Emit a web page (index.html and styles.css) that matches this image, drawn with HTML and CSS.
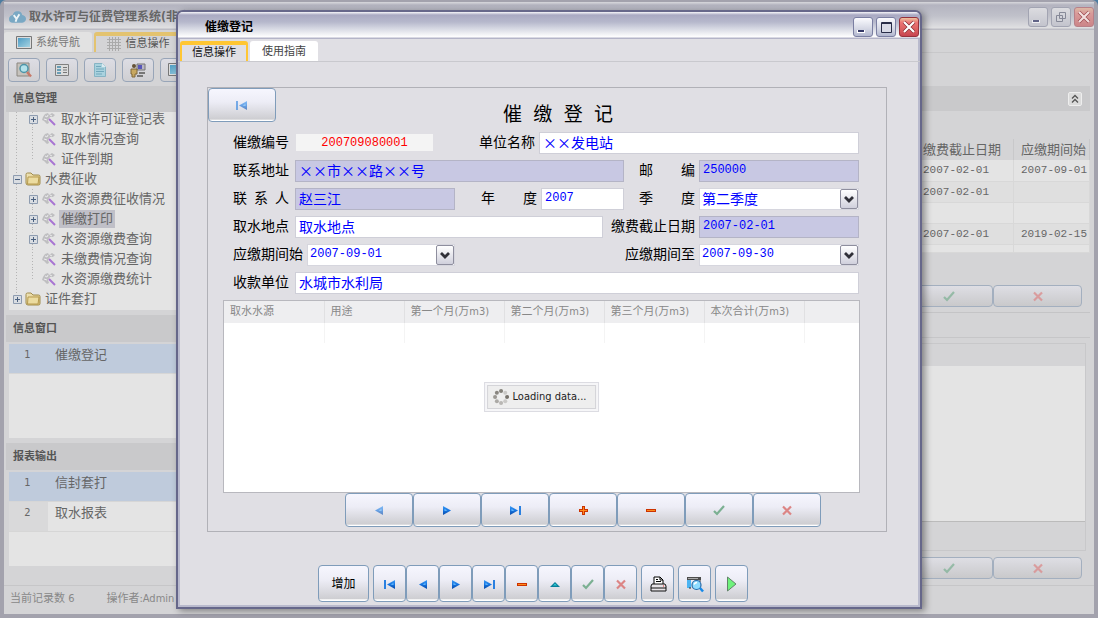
FILE: index.html
```html
<!DOCTYPE html>
<html lang="zh-CN">
<head>
<meta charset="utf-8">
<title>取水许可与征费管理系统</title>
<link rel="stylesheet" href="styles.css">
</head>
<body>
<svg class="defs" aria-hidden="true">
  <defs>
    <linearGradient id="blue" x1="0" y1="0" x2="0" y2="1"><stop offset="0" stop-color="#3f9cf5"/><stop offset=".5" stop-color="#1473e0"/><stop offset="1" stop-color="#0a4aa6"/></linearGradient>
    <linearGradient id="folder" x1="0" y1="0" x2="1" y2="1"><stop offset="0" stop-color="#f0e6bd"/><stop offset="1" stop-color="#d9bd6c"/></linearGradient>
    <linearGradient id="screen" x1="0" y1="0" x2="1" y2="1"><stop offset="0" stop-color="#4d9cc4"/><stop offset="1" stop-color="#a6d3e2"/></linearGradient>
  </defs>
  <symbol id="i-prev" viewBox="0 0 16 16"><path d="M12 4v9L4 8.500z" fill="url(#blue)"/><path d="M10.500 7v2L7.500 8.500z" fill="#6bc0ff"/></symbol>
  <symbol id="i-next" viewBox="0 0 16 16"><path d="M4 4v9l8-4.500z" fill="url(#blue)"/><path d="M5.500 7v2l3-.5z" fill="#6bc0ff"/></symbol>
  <symbol id="i-first" viewBox="0 0 16 16"><path d="M2 4h2v9H2z" fill="#2a80e0"/><path d="M13 4v9L5 8.500z" fill="url(#blue)"/><path d="M11.500 7v2L8.500 8.500z" fill="#6bc0ff"/></symbol>
  <symbol id="i-last" viewBox="0 0 16 16"><path d="M12 4h2v9h-2z" fill="#2a80e0"/><path d="M3 4v9l8-4.500z" fill="url(#blue)"/><path d="M4.500 7v2l3-.5z" fill="#6bc0ff"/></symbol>
  <symbol id="i-plus" viewBox="0 0 16 16"><path d="M7 4h3v3h3v3h-3v3H7v-3H4V7h3z" fill="#cc3300"/><path d="M8 5h1v3h3v1H9v3H8V9H5V8h3z" fill="#ff8a1c"/></symbol>
  <symbol id="i-minus" viewBox="0 0 16 16"><path d="M3 7h10v3H3z" fill="#cc3300"/><path d="M4 8h8v1H4z" fill="#ff8a1c"/></symbol>
  <symbol id="i-up" viewBox="0 0 16 16"><path d="M3 11l5-5 5 5z" fill="#087f9a"/><path d="M6 9.500l2-2 2 2z" fill="#35d0d8"/></symbol>
  <symbol id="i-check" viewBox="0 0 16 16"><path d="M3 9l3 3 7-8" fill="none" stroke="#7bb092" stroke-width="2.200"/></symbol>
  <symbol id="i-cross" viewBox="0 0 16 16"><path d="M4 4.500l8 8m0-8l-8 8" fill="none" stroke="#dc8585" stroke-width="2.200"/></symbol>
  <symbol id="i-print" viewBox="0 0 18 18"><path d="M5 9V2h6l3 3v4" fill="#fff" stroke="#000"/><path d="M11 2v3h3M7 4.500h2M7 6.500h5" fill="none" stroke="#000"/><path d="M3 9h13l1 2v5H2v-5z" fill="#e6e2e6" stroke="#111"/><path d="M2 13h15" stroke="#111"/><path d="M14 11h1" stroke="#e22"/></symbol>
  <symbol id="i-preview" viewBox="0 0 18 18"><path d="M1 2h14v3H1z" fill="#4c4c4c"/><path d="M2 3h10v1H2z" fill="#aaa"/><path d="M1 5h4v8H1z" fill="#4cb4f2"/><path d="M5 13H3M14 5v2" stroke="#333"/><circle cx="10.500" cy="10" r="4.500" fill="#8fdcff" stroke="#2468a8" stroke-width="1.200"/><path d="M8 9.500q1-2 3-2" stroke="#fff" stroke-width="1.500" fill="none"/><path d="M14 13l3 3.500" stroke="#1689e8" stroke-width="2.500"/></symbol>
  <symbol id="i-run" viewBox="0 0 18 18"><path d="M4.500 2v14L13 9z" fill="#6ff27c" stroke="#63836a"/></symbol>
  <symbol id="i-leaf" viewBox="0 0 16 16"><path d="M2 6l2-3 3-1 1 2 3-2 3 2-2 2-3 0-2 3 1 3-2 1-3-3-2-1z" fill="#bfbfc1"/><path d="M4 5l2 1 1-2M3 8l3 1M9 4l2 1" stroke="#ececec" fill="none"/><path d="M8 8l6 6" stroke="#a874d2" stroke-width="2"/></symbol>
  <symbol id="i-folder" viewBox="0 0 16 16"><path d="M1 3.500q0-1.500 1.500-1.500H6l2 2h5.500q1.500 0 1.500 1.500v7q0 1.500-1.500 1.500H3q-2 0-2-2z" fill="url(#folder)" stroke="#a08c4c"/><path d="M3 6h11l-1 7H2.500z" fill="#ecdca0" stroke="#b79b50"/></symbol>
  <symbol id="i-exp" viewBox="0 0 9 9"><path d="M.5.5h8v8h-8z" fill="#d9dde2" stroke="#8e9cb0"/><path d="M2 4.500h5M4.500 2v5" stroke="#4b6180"/></symbol>
  <symbol id="i-col" viewBox="0 0 9 9"><path d="M.5.5h8v8h-8z" fill="#d9dde2" stroke="#8e9cb0"/><path d="M2 4.500h5" stroke="#4b6180"/></symbol>
  <symbol id="i-screen" viewBox="0 0 16 14"><path d="M.5.500h15v12H.5z" fill="#ddd" stroke="#777"/><path d="M2 2h12v9H2z" fill="url(#screen)"/></symbol>
  <symbol id="i-search" viewBox="0 0 16 16"><path d="M1 1h12v13H1z" fill="#c7c3bd" stroke="#8b8780"/><circle cx="8" cy="6.500" r="4" fill="#b4e2ea" stroke="#4d95a8" stroke-width="1.500"/><path d="M11 10l4 4.500" stroke="#c77a6a" stroke-width="2.500"/></symbol>
  <symbol id="i-list" viewBox="0 0 16 16"><path d="M1.500 2.500h13v11h-13z" fill="#dcdcdc" stroke="#808080"/><path d="M3 4h4v8H3z" fill="#6a9db4"/><path d="M3 6.500h4M3 9.500h4" stroke="#ddd"/><path d="M9 5.500h4M9 8h4M9 10.500h4" stroke="#777"/></symbol>
  <symbol id="i-doc" viewBox="0 0 16 16"><path d="M2.500 1.500h8l3 3v10h-11z" fill="#a9d2de" stroke="#86b4c4"/><path d="M4 4.500h5M4 7h8M4 9.500h8M4 12h6" stroke="#72a8bc"/><path d="M10 1v4h4" fill="#dbeaf0"/></symbol>
  <symbol id="i-user" viewBox="0 0 16 16"><path d="M7 2h8v6H7z" fill="#b9b6c4" stroke="#777"/><path d="M8 3h4v4H8z" fill="#5756b8"/><circle cx="4" cy="4" r="2" fill="#645236"/><path d="M1 7h6v5H5v3H2v-3H1z" fill="#c8a860" stroke="#80683a"/><path d="M9 11h6M7 14h6" stroke="#777" stroke-width="2"/></symbol>
  <symbol id="i-grid" viewBox="0 0 14 14"><path d="M2.500 0v14M5.500 0v14M8.500 0v14M11.500 0v14M0 2.500h14M0 5.500h14M0 8.500h14M0 11.500h14" stroke="#aaa"/></symbol>
  <symbol id="i-min" viewBox="0 0 20 20"><path d="M4 13h8v3H4z" fill="#fff"/><path d="M5 13h6v2H5z" fill="#343866"/></symbol>
  <symbol id="i-max" viewBox="0 0 20 20"><path d="M5.500 5.500h10v10h-10zM5 6.500h11" fill="#d9dbe7" stroke="#292d48"/></symbol>
  <symbol id="i-restore" viewBox="0 0 20 20"><path d="M8.500 5.500h6v6h-6zM5.500 8.500h6v6h-6z" fill="#d5d6dc" stroke="#676b7d"/></symbol>
  <symbol id="i-close" viewBox="0 0 20 20"><path d="M5 5l10 10M15 5L5 15" stroke="#842c32" stroke-width="3.500"/><path d="M5 5l10 10M15 5L5 15" stroke="#fff" stroke-width="2.200"/></symbol>
  <symbol id="i-arrow" viewBox="0 0 16 16"><path d="M4 6l4 4 4-4" fill="none" stroke="#303038" stroke-width="2.800"/></symbol>
</svg>

<div class="app">
  <header class="titlebar">
    <svg class="logo" viewBox="0 0 18 14"><path d="M4 13q-4 0-4-4 0-3 4-4 1-5 6-4 3 0 4 4 4 1 4 4t-4 4z" fill="#79a8c4"/><path d="M5 5l3 4 3-5M8 9l-1 3" stroke="#eef4f7" stroke-width="2" fill="none"/></svg>
    <h1>取水许可与征费管理系统(非商用)</h1>
    <div class="win-buttons muted">
      <button aria-label="最小化"><svg><use href="#i-min"/></svg></button>
      <button aria-label="还原"><svg><use href="#i-restore"/></svg></button>
      <button class="close" aria-label="关闭"><svg><use href="#i-close"/></svg></button>
    </div>
  </header>
  <nav class="tabs">
    <button class="tab"><svg class="ic16"><use href="#i-screen"/></svg>系统导航</button>
    <button class="tab active"><svg class="ic14"><use href="#i-grid"/></svg>信息操作</button>
  </nav>
  <div class="workspace">
    <aside class="sidebar">
      <div class="tools">
        <button aria-label="查询"><svg class="ic16"><use href="#i-search"/></svg></button>
        <button aria-label="列表"><svg class="ic16"><use href="#i-list"/></svg></button>
        <button aria-label="文档"><svg class="ic16"><use href="#i-doc"/></svg></button>
        <button aria-label="用户"><svg class="ic16"><use href="#i-user"/></svg></button>
        <button aria-label="屏幕"><svg class="ic16"><use href="#i-screen"/></svg></button>
      </div>
      <h2 class="first">信息管理</h2>
      <div class="tree-box">
        <ul class="tree">
          <li><i class="line"></i><i class="line mid"><svg><use href="#i-exp"/></svg></i><svg class="ic16"><use href="#i-leaf"/></svg><span>取水许可证登记表</span></li>
          <li><i class="line"></i><i class="line mid"></i><svg class="ic16"><use href="#i-leaf"/></svg><span>取水情况查询</span></li>
          <li><i class="line"></i><i class="line mid last"></i><svg class="ic16"><use href="#i-leaf"/></svg><span>证件到期</span></li>
          <li><i class="line"><svg><use href="#i-col"/></svg></i><svg class="ic16"><use href="#i-folder"/></svg><span>水费征收</span></li>
          <li><i class="line"></i><i class="line mid"><svg><use href="#i-exp"/></svg></i><svg class="ic16"><use href="#i-leaf"/></svg><span>水资源费征收情况</span></li>
          <li><i class="line"></i><i class="line mid"><svg><use href="#i-exp"/></svg></i><svg class="ic16"><use href="#i-leaf"/></svg><span class="selected">催缴打印</span></li>
          <li><i class="line"></i><i class="line mid"><svg><use href="#i-exp"/></svg></i><svg class="ic16"><use href="#i-leaf"/></svg><span>水资源缴费查询</span></li>
          <li><i class="line"></i><i class="line mid"></i><svg class="ic16"><use href="#i-leaf"/></svg><span>未缴费情况查询</span></li>
          <li><i class="line"></i><i class="line mid last"></i><svg class="ic16"><use href="#i-leaf"/></svg><span>水资源缴费统计</span></li>
          <li><i class="line last"><svg><use href="#i-exp"/></svg></i><svg class="ic16"><use href="#i-folder"/></svg><span>证件套打</span></li>
        </ul>
      </div>
      <h2>信息窗口</h2>
      <ol class="list">
        <li class="current"><b>1</b><span>催缴登记</span></li>
      </ol>
      <h2>报表输出</h2>
      <ol class="list">
        <li class="current"><b>1</b><span>信封套打</span></li>
        <li><b>2</b><span>取水报表</span></li>
      </ol>
    </aside>
    <main class="records">
      <div class="band"><button aria-label="收起"><svg viewBox="0 0 14 14"><path d="M4 6.500l3-3 3 3M4 10.500l3-3 3 3" fill="none" stroke="#555" stroke-width="1.300"/></svg></button></div>
      <div class="upper">
        <table class="data">
          <colgroup><col><col class="c-due"><col class="c-start"></colgroup>
          <thead><tr><th></th><th>缴费截止日期</th><th>应缴期间始</th></tr></thead>
          <tbody>
            <tr><td></td><td>2007-02-01</td><td>2007-09-01</td></tr>
            <tr><td></td><td>2007-02-01</td><td></td></tr>
            <tr><td></td><td></td><td></td></tr>
            <tr><td></td><td>2007-02-01</td><td>2019-02-15</td></tr>
            <tr class="short"><td></td><td></td><td></td></tr>
          </tbody>
        </table>
        <div class="pair-buttons">
          <button aria-label="确定"><svg class="ic16"><use href="#i-check"/></svg></button>
          <button aria-label="取消"><svg class="ic16"><use href="#i-cross"/></svg></button>
        </div>
      </div>
      <div class="lower">
        <div class="blank-grid"><div class="blank-body"></div></div>
        <div class="pair-buttons">
          <button aria-label="确定"><svg class="ic16"><use href="#i-check"/></svg></button>
          <button aria-label="取消"><svg class="ic16"><use href="#i-cross"/></svg></button>
        </div>
      </div>
    </main>
  </div>
  <footer class="status"><span>当前记录数 6</span><span>操作者:Admin</span></footer>
</div>

<section class="dialog" role="dialog" aria-labelledby="dlg-title">
  <header class="titlebar">
    <h1 id="dlg-title">催缴登记</h1>
    <div class="win-buttons">
      <button aria-label="最小化"><svg><use href="#i-min"/></svg></button>
      <button aria-label="最大化"><svg><use href="#i-max"/></svg></button>
      <button class="close" aria-label="关闭"><svg><use href="#i-close"/></svg></button>
    </div>
  </header>
  <nav class="tabs">
    <button class="tab active">信息操作</button>
    <button class="tab">使用指南</button>
  </nav>
  <div class="page">
    <form class="panel">
      <div class="panel-head">
        <button type="button" class="glass wide faded" aria-label="首条"><svg class="ic16"><use href="#i-first"/></svg></button>
        <h2>催 缴 登 记</h2>
      </div>
      <div class="fields">
        <div class="row">
          <div class="pair"><label for="f-no">催缴编号</label><input id="f-no" class="num code" value="200709080001" readonly></div>
          <div class="pair end tight"><label for="f-name">单位名称</label><input id="f-name" class="w-name" value="××发电站"></div>
        </div>
        <div class="row">
          <div class="pair grow"><label for="f-addr">联系地址</label><input id="f-addr" class="locked" value="××市××路××号" readonly></div>
          <div class="pair end tight"><label for="f-zip">邮 编</label><input id="f-zip" class="num locked" value="250000" readonly></div>
        </div>
        <div class="row">
          <div class="pair"><label for="f-man">联 系 人</label><input id="f-man" class="locked" value="赵三江" readonly></div>
          <div class="pair end tight"><label for="f-year">年 度</label><input id="f-year" class="num w-year" value="2007"></div>
          <div class="pair tight"><label for="f-q">季 度</label><div class="combo"><select id="f-q"><option>第二季度</option></select><i><svg class="ic16"><use href="#i-arrow"/></svg></i></div></div>
        </div>
        <div class="row narrow">
          <div class="pair grow"><label for="f-place">取水地点</label><input id="f-place" value="取水地点"></div>
          <div class="pair end tight"><label class="w-6" for="f-due">缴费截止日期</label><input id="f-due" class="num locked" value="2007-02-01" readonly></div>
        </div>
        <div class="row">
          <div class="pair tight"><label class="w-5" for="f-from">应缴期间始</label><div class="combo small"><select id="f-from" class="num"><option>2007-09-01</option></select><i><svg class="ic16"><use href="#i-arrow"/></svg></i></div></div>
          <div class="pair end tight"><label class="w-5" for="f-to">应缴期间至</label><div class="combo"><select id="f-to" class="num"><option>2007-09-30</option></select><i><svg class="ic16"><use href="#i-arrow"/></svg></i></div></div>
        </div>
        <div class="row">
          <div class="pair grow"><label for="f-payee">收款单位</label><input id="f-payee" value="水城市水利局"></div>
        </div>
      </div>
      <div class="grid-box">
        <table class="months">
          <colgroup><col class="c100"><col class="c80"><col class="c100"><col class="c100"><col class="c100"><col class="c100"><col></colgroup>
          <thead><tr><th>取水水源</th><th>用途</th><th>第一个月(万m3)</th><th>第二个月(万m3)</th><th>第三个月(万m3)</th><th>本次合计(万m3)</th><th></th></tr></thead>
          <tbody><tr><td></td><td></td><td></td><td></td><td></td><td></td><td></td></tr></tbody>
        </table>
        <div class="loading"><div>
          <svg class="ic16" viewBox="0 0 16 16"><g fill="#77736c"><circle cx="8" cy="2" r="2" opacity=".9"/><circle cx="12.200" cy="3.800" r="2" opacity=".3"/><circle cx="14" cy="8" r="2"/><circle cx="12.200" cy="12.200" r="2" opacity=".3"/><circle cx="8" cy="14" r="2" opacity=".45"/><circle cx="3.800" cy="12.200" r="2" opacity=".55"/><circle cx="2" cy="8" r="2" opacity=".7"/><circle cx="3.800" cy="3.800" r="2" opacity=".85"/></g></svg>
          <span>Loading data...</span></div>
        </div>
      </div>
      <div class="navigator">
        <button type="button" class="glass wide faded" aria-label="上一条"><svg class="ic16"><use href="#i-prev"/></svg></button>
        <button type="button" class="glass wide" aria-label="下一条"><svg class="ic16"><use href="#i-next"/></svg></button>
        <button type="button" class="glass wide" aria-label="末条"><svg class="ic16"><use href="#i-last"/></svg></button>
        <button type="button" class="glass wide" aria-label="新增"><svg class="ic16"><use href="#i-plus"/></svg></button>
        <button type="button" class="glass wide" aria-label="删除"><svg class="ic16"><use href="#i-minus"/></svg></button>
        <button type="button" class="glass wide" aria-label="保存"><svg class="ic16"><use href="#i-check"/></svg></button>
        <button type="button" class="glass wide" aria-label="取消"><svg class="ic16"><use href="#i-cross"/></svg></button>
      </div>
    </form>
    <div class="actions">
      <button class="glass add">增加</button>
      <div class="group">
        <button class="glass" aria-label="首条"><svg class="ic16"><use href="#i-first"/></svg></button>
        <button class="glass" aria-label="上一条"><svg class="ic16"><use href="#i-prev"/></svg></button>
        <button class="glass" aria-label="下一条"><svg class="ic16"><use href="#i-next"/></svg></button>
        <button class="glass" aria-label="末条"><svg class="ic16"><use href="#i-last"/></svg></button>
        <button class="glass" aria-label="删除"><svg class="ic16"><use href="#i-minus"/></svg></button>
        <button class="glass" aria-label="编辑"><svg class="ic16"><use href="#i-up"/></svg></button>
        <button class="glass" aria-label="保存"><svg class="ic16"><use href="#i-check"/></svg></button>
        <button class="glass" aria-label="取消"><svg class="ic16"><use href="#i-cross"/></svg></button>
      </div>
      <button class="glass" aria-label="打印"><svg class="ic18"><use href="#i-print"/></svg></button>
      <button class="glass" aria-label="预览"><svg class="ic18"><use href="#i-preview"/></svg></button>
      <button class="glass" aria-label="执行"><svg class="ic18"><use href="#i-run"/></svg></button>
    </div>
  </div>
</section>
</body>
</html>
```

FILE: styles.css
```css
* { box-sizing: border-box; }

body {
  margin: 0;
  height: 100vh;
  position: relative;
  overflow: hidden;
  background: #4d7ca0;
  font: 11px/16px "DejaVu Sans Condensed", "Noto Sans CJK SC", sans-serif;
  color: #666;
}

h1, h2, ul, ol { margin: 0; padding: 0; list-style: none; }
button, input, select { font: inherit; color: inherit; margin: 0; padding: 0; }
button { display: flex; align-items: center; justify-content: center; }
svg { display: block; flex: none; }
.defs { position: absolute; width: 0; height: 0; }
.ic14 { width: 14px; height: 14px; }
.ic16 { width: 16px; height: 16px; }
.ic18 { width: 18px; height: 18px; }

/* main window */
.app {
  height: 100%;
  display: flex;
  flex-direction: column;
  border: 4px solid #a3a2ad;
  border-top-width: 2px;
  border-radius: 6px 6px 0 0;
  background: #d4d4d6;
}

.titlebar { display: flex; align-items: center; flex: none; }
.titlebar h1 { flex: 1; font-size: 12px; font-weight: 700; white-space: nowrap; }

.app > .titlebar {
  height: 28px;
  padding: 2px 0 0 5px;
  gap: 3px;
  background: linear-gradient(#d8d8dc 0, #b4b4c0 3px, #c0c1ca 14px, #e0e0e2 26px, #bcbcc4 27px);
}
.logo { width: 17px; height: 14px; }

.win-buttons { display: flex; gap: 3px; }
.win-buttons button {
  width: 20px;
  height: 20px;
  border: 1px solid #7b7fa2;
  border-radius: 3px;
  background: linear-gradient(#fbfbfe, #d4d7e4 60%, #b2b7cf);
}
.win-buttons svg { width: 20px; height: 20px; }
.win-buttons .close { border-color: #96323c; background: linear-gradient(#ecc4a0, #ec7474 25%, #dd6262 60%, #c74450); }
.muted button { border-color: #a2a4b2; background: linear-gradient(#dcdce0, #c3c4cd); }
.muted .close { border-color: #b88088; background: linear-gradient(#dcb8a4, #d99a9a 30%, #cc8588); }
.muted svg { opacity: .7; }

.tabs { display: flex; gap: 2px; flex: none; }
.tab { border: 0; width: 68px; height: 20px; padding-top: 2px; border-radius: 3px 3px 0 0; background: #fff; color: #444; }
.tab.active { background: #e0dfe4; color: #111; border: solid #ffc633; border-width: 4px 2px 0; padding: 0; }

.app .tabs { padding: 2px 0 0; border-bottom: 1px solid #c8c8ca; }
.app .tab { width: 88px; gap: 4px; background: #e2e2e2; color: #777; }
.app .tab.active { width: 88px; gap: 5px; background: #d4d4d6; color: #555; border-color: #e3c36f; }

.workspace { flex: 1; min-height: 0; display: flex; gap: 4px; }

.sidebar { width: 200px; flex: none; display: flex; flex-direction: column; padding-left: 2px; }
.tools { display: flex; gap: 6px; padding: 5px 2px 4px; }
.tools button {
  width: 32px;
  height: 24px;
  border: 1px solid #98a5b8;
  border-radius: 4px;
  background: linear-gradient(#dddde4, #cfcfd2);
}
.sidebar h2 { height: 27px; margin-top: 5px; padding-left: 7px; background: #c9c9cb; font-size: 11px; line-height: 27px; color: #555; }
.sidebar .first { height: 26px; margin-top: 0; line-height: 25px; }

.tree-box { margin: 0 0 0 3px; height: 198px; overflow: hidden; background: #e4e4e4; }
.tree { margin-top: -3px; font-size: 13px; line-height: 18px; }
.tree li { display: flex; align-items: center; height: 20px; white-space: nowrap; }
.tree span { margin-left: 2px; padding: 0 2px; }
.tree .selected { background: #c0c0c8; }
.line {
  width: 16px;
  height: 20px;
  display: flex;
  align-items: center;
  justify-content: center;
  background: repeating-linear-gradient(#b4b4b4 0 1px, transparent 1px 3px) 7px 0 / 1px 100% no-repeat;
}
.line.last { background-size: 1px 50%; }
.line svg { width: 9px; height: 9px; }

.list { height: 94px; margin: 2px 0 0 3px; background: #e4e4e4; font-size: 13px; }
.list li { display: flex; height: 30px; line-height: 22px; border-bottom: 1px solid #d6d6d6; }
.list b { width: 39px; padding-right: 2px; text-align: center; font-size: 11px; font-weight: 400; background: #d9d9da; }
.list span { padding-left: 7px; }
.list .current, .list .current b { background: #bfcbdc; }

.status { height: 29px; flex: none; display: flex; gap: 32px; padding: 0 6px; border-top: 1px solid #c6c6c8; line-height: 25px; color: #888; }

.records { flex: 1; min-width: 0; display: flex; flex-direction: column; padding: 33px 4px 0 0; }
.band { height: 25px; display: flex; align-items: center; justify-content: flex-end; padding-right: 8px; background: #c9c9cb; }
.band button { width: 14px; height: 14px; border: 1px solid #eee; border-radius: 2px; background: #dcdcdc; }
.band svg { width: 14px; height: 14px; }
.upper { padding-top: 28px; border-bottom: 1px solid #c4c4c6; }
.data { width: 100%; table-layout: fixed; border-collapse: collapse; }
.c-due { width: 98px; }
.c-start { width: 76px; }
.data th { height: 21px; padding: 0 0 0 7px; font-size: 13px; font-weight: 400; text-align: left; white-space: nowrap; border-right: 1px solid #c8c8ca; }
.data td { height: 21px; padding: 0 0 0 7px; border: 1px solid #d8d8d8; border-width: 0 1px 1px 0; background: #e4e4e4; font-family: "Liberation Mono", monospace; }
.data tr:nth-child(even) td { background: #dfdfdf; }
.data .short td { height: 8px; }
.pair-buttons { display: flex; justify-content: flex-end; padding: 32px 8px 5px 0; }
.pair-buttons button { width: 89px; height: 22px; border: 1px solid #a3afbf; border-radius: 4px; background: linear-gradient(#dedee4, #c9c9cb); }
.pair-buttons svg { opacity: .7; }

.lower { flex: 1; display: flex; flex-direction: column; margin-top: 24px; border-top: 1px solid #c6c6c8; }
.blank-grid { flex: 1; margin: 5px 4px 0 0; padding: 22px 0 28px; border: 1px solid #c8c8ca; }
.blank-body { height: 100%; background: #e4e4e4; border-bottom: 1px solid #bbb; }
.lower .pair-buttons { padding-top: 6px; padding-bottom: 6px; }

/* dialog */
.dialog {
  position: absolute;
  inset: 10px 176px 9px 176px;
  display: flex;
  flex-direction: column;
  border: 2px solid #66678a;
  border-radius: 7px 7px 0 0;
  background: #e0dfe4;
  box-shadow: inset 0 0 0 2px #b9bacd, 3px 2px 7px rgba(0, 0, 0, .4);
}
.dialog > .titlebar {
  height: 27px;
  padding: 2px 1px 0 27px;
  border-radius: 5px 5px 0 0;
  background: linear-gradient(#f6f6fa 0, #a9a9c2 3px, #b6b8cc 10px, #d8dae4 17px, #fff 25px, #b4b4c8 26px);
  color: #000;
}
.dialog .tabs { padding: 2px 2px 0; border-bottom: 1px solid #c9c9ce; }

.page { flex: 1; min-height: 0; display: flex; flex-direction: column; gap: 33px; padding: 25px 33px 5px 29px; }

.panel { flex: 1; min-height: 0; display: flex; flex-direction: column; padding-bottom: 4px; border: 1px solid #b1b1b7; }
.panel-head { height: 44px; flex: none; display: flex; align-items: flex-start; }
.panel-head h2 { width: 110px; margin: 10px 0 0 227px; font: 19px/30px "Noto Sans CJK SC", sans-serif; color: #000; text-align-last: justify; }

.glass {
  width: 33px;
  height: 37px;
  border: 1px solid #7f9cba;
  border-radius: 4px;
  background: linear-gradient(#f6f6fe, #ededf6 40%, #cdcdd1 95%, #fff 96%);
  color: #000;
}
.glass.wide { width: 68px; height: 34px; }
.faded svg { opacity: .6; }

.fields { display: flex; flex-direction: column; gap: 6px; padding: 0 27px 0 25px; color: #000; font: 14px/18px "Noto Sans CJK SC", sans-serif; }
.row { display: flex; gap: 15px; height: 22px; }
.row.narrow { gap: 8px; }
.pair { display: flex; gap: 6px; }
.pair.tight { gap: 4px; }
.grow, .grow input { flex: 1; min-width: 0; }
.end { margin-left: auto; }
label { width: 56px; flex: none; text-align-last: justify; white-space: nowrap; }
.w-5 { width: 70px; }
.w-6 { width: 84px; }
.fields input { width: 160px; height: 22px; padding: 0 3px 3px; border: 1px solid #cfcfd8; background: #fff; color: #00f; }
.fields .num { font-family: "Liberation Mono", monospace; font-size: 12px; }
.fields .w-name { width: 320px; }
.fields .w-year { width: 83px; }
.fields .code { width: 139px; height: 19px; margin-top: 1px; padding-bottom: 0; text-align: center; background: #f4f4f4; border-color: #e0dfe4; color: #f00; }
.fields .locked { background: #c8c8e3; border-color: #b4b4c6; }
.combo { display: flex; width: 160px; height: 22px; border: 1px solid #d6d6de; background: #fff; }
.combo.small { width: 148px; }
.combo select { flex: 1; min-width: 0; padding: 0 2px 3px; border: 0; background: #fff; appearance: none; color: #00f; }
.combo i { width: 18px; display: flex; align-items: center; justify-content: center; border: 1px solid #8e8e9e; border-radius: 2px; background: linear-gradient(#fff, #d0d0dc); pointer-events: none; }

.grid-box { position: relative; flex: 1; min-height: 0; margin: 6px 26px 0 15px; border: 1px solid #b8b8be; background: #fff; }
.months { width: 100%; table-layout: fixed; border-collapse: collapse; }
.c100 { width: 100px; }
.c80 { width: 80px; }
.months th { height: 22px; padding: 0 0 0 6px; background: #eeeef0; border-right: 1px solid #e0e0e2; font-weight: 400; text-align: left; white-space: nowrap; color: #888; }
.months td { height: 20px; padding: 0; border-right: 1px solid #f4f4f4; }
.months th:last-child, .months td:last-child { border-right: 0; }
.loading {
  position: absolute;
  top: 50%;
  left: 50%;
  transform: translate(-50%, -50%);
  padding: 2px;
  border: 1px solid #dcdce2;
  background: #f6f6f8;
  color: #222;
}
.loading div { display: flex; align-items: center; gap: 4px; height: 24px; padding: 0 9px 0 5px; border: 1px solid #d4d4d8; background: #eee; white-space: nowrap; }

.navigator { display: flex; justify-content: center; padding-left: 72px; }
.actions { display: flex; flex: none; justify-content: center; gap: 4px; padding-right: 28px; }
.actions > .glass + .glass { margin-left: 0; }
.group { display: flex; }
.actions .add { width: 51px; font-size: 12px; }
```
